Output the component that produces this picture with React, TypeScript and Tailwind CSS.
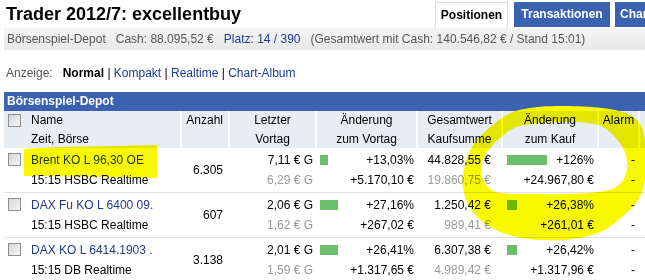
import React from "react";

type Row = {
  name: string; sub: string; qty: string; last: string; prev: string;
  vBar: number; vPct: string; vAbs: string; total: string; cost: string;
  kBar: number; kPct: string; kAbs: string;
};

const rows: Row[] = [
  { name: "Brent KO L 96,30 OE", sub: "15:15 HSBC Realtime", qty: "6.305", last: "7,11 € G", prev: "6,29 € G", vBar: 8, vPct: "+13,03%", vAbs: "+5.170,10 €", total: "44.828,55 €", cost: "19.860,75 €", kBar: 40, kPct: "+126%", kAbs: "+24.967,80 €" },
  { name: "DAX Fu KO L 6400 09.", sub: "15:15 HSBC Realtime", qty: "607", last: "2,06 € G", prev: "1,62 € G", vBar: 18, vPct: "+27,16%", vAbs: "+267,02 €", total: "1.250,42 €", cost: "989,41 €", kBar: 10, kPct: "+26,38%", kAbs: "+261,01 €" },
  { name: "DAX KO L 6414.1903 .", sub: "15:15 DB Realtime", qty: "3.138", last: "2,01 € G", prev: "1,59 € G", vBar: 18, vPct: "+26,41%", vAbs: "+1.317,65 €", total: "6.307,38 €", cost: "4.989,42 €", kBar: 10, kPct: "+26,42%", kAbs: "+1.317,96 €" },
];

function smooth(pts: number[][]): string {
  const n = pts.length;
  let d = `M${pts[0][0]},${pts[0][1]}`;
  for (let i = 0; i < n; i++) {
    const p0 = pts[(i - 1 + n) % n];
    const p1 = pts[i];
    const p2 = pts[(i + 1) % n];
    const p3 = pts[(i + 2) % n];
    const c1x = p1[0] + (p2[0] - p0[0]) / 6;
    const c1y = p1[1] + (p2[1] - p0[1]) / 6;
    const c2x = p2[0] - (p3[0] - p1[0]) / 6;
    const c2y = p2[1] - (p3[1] - p1[1]) / 6;
    d += ` C${c1x.toFixed(1)},${c1y.toFixed(1)} ${c2x.toFixed(1)},${c2y.toFixed(1)} ${p2[0]},${p2[1]}`;
  }
  return d + " Z";
}

const outer = [
  [505, 116], [530, 108], [565, 106], [602, 108], [628, 114], [641, 126], [646, 150], [645, 180],
  [638, 200], [622, 217], [600, 232], [565, 240], [522, 238], [492, 228], [472, 211], [463, 188],
  [465, 165], [476, 141],
];
const inner = [
  [500, 138], [520, 126], [565, 122], [595, 124], [611, 133], [624, 150], [627, 168], [621, 183],
  [605, 191], [570, 194], [530, 194], [500, 193], [487, 186], [481, 172], [484, 157], [492, 146],
];

const ring = smooth(outer) + " " + smooth(inner);

function Checkbox() {
  return (
    <div className="w-[13px] h-[13px] border border-[#8e8f8f] bg-gradient-to-br from-[#d6d6d6] to-[#f6f6f6] shrink-0" />
  );
}

function Bar({ w }: { w: number }) {
  return <div className="h-[10px] bg-[#6cbf6b]" style={{ width: w }} />;
}

const grid = "grid grid-cols-[176px_48px_87px_101px_85px_96px_41px_1fr]";

export default function App() {
  return (
    <div className="relative w-[645px] h-[280px] overflow-hidden bg-white text-[12px] text-black font-['Liberation_Sans',Arial,sans-serif] whitespace-nowrap">
      {/* title row */}
      <div className="flex h-[28px]">
        <div className="w-[435px] shrink-0 pl-[6px] pt-[2px] text-[18px] font-bold leading-[24px]">
          Trader 2012/7: excellentbuy
        </div>
        <div className="flex pt-[2px] shrink-0">
          <div className="w-[73px] h-[26px] border border-b-0 border-[#dcdcdc] bg-white font-bold leading-[25px] text-center">Positionen</div>
          <div className="ml-[6px] w-[96px] h-[25px] bg-[#3b62b1] text-white font-bold leading-[25px] text-center">Transaktionen</div>
          <div className="ml-[5px] h-[25px] pl-[5px] pr-[5px] bg-[#3b62b1] text-white font-bold leading-[25px]">Charts</div>
        </div>
      </div>

      {/* info bar */}
      <div className="ml-[4px] h-[22px] flex items-center gap-[10px] pl-[3px] bg-gradient-to-b from-[#f5f5f5] to-[#e8e8e8] text-[#555]">
        <span>Börsenspiel-Depot</span>
        <span>Cash: 88.095,52 €</span>
        <span className="text-[#1c3a96]">Platz: 14 / 390</span>
        <span>(Gesamtwert mit Cash: 140.546,82 € / Stand 15:01)</span>
      </div>

      {/* Anzeige */}
      <div className="h-[42px] pt-[4px] pl-[6px] flex items-center">
        <span className="text-[#555]">Anzeige:</span>
        <span className="ml-[10px] font-bold">Normal</span>
        <span>&nbsp;|&nbsp;</span>
        <span className="text-[#1c3a96]">Kompakt</span>
        <span>&nbsp;|&nbsp;</span>
        <span className="text-[#1c3a96]">Realtime</span>
        <span>&nbsp;|&nbsp;</span>
        <span className="text-[#1c3a96]">Chart-Album</span>
      </div>

      {/* table */}
      <div className="ml-[4px]">
        <div className="h-[19px] leading-[19px] pl-[3px] bg-[#3b62b1] text-white font-bold">Börsenspiel-Depot</div>
        <div className={`${grid} h-[37px] bg-[#e8ecf5] leading-[19px]`}>
          <div className="flex pl-[4px]">
            <div className="pt-[3px]"><Checkbox /></div>
            <div className="ml-[10px]">
              <div>Name</div>
              <div>Zeit, Börse</div>
            </div>
          </div>
          <div className="border-l-2 border-white text-right pr-[5px]">Anzahl</div>
          <div className="border-l-2 border-white text-center">
            <div>Letzter</div>
            <div>Vortag</div>
          </div>
          <div className="border-l-2 border-white text-center">
            <div>Änderung</div>
            <div>zum Vortag</div>
          </div>
          <div className="border-l-2 border-white text-center">
            <div>Gesamtwert</div>
            <div>Kaufsumme</div>
          </div>
          <div className="border-l-2 border-white text-center">
            <div>Änderung</div>
            <div>zum Kauf</div>
          </div>
          <div className="border-l-2 border-white text-center">Alarm</div>
          <div className="border-l-2 border-white" />
        </div>

        {rows.map((r, i) => (
          <div key={i} className={`${grid} pt-[2px] pb-[2px] leading-[20px] border-b border-[#e2e2e2]`}>
            <div className="flex pl-[4px]">
              <div className="pt-[3px]"><Checkbox /></div>
              <div className="ml-[10px]">
                <div className="text-[#213a8f]">{r.name}</div>
                <div>{r.sub}</div>
              </div>
            </div>
            <div className="flex items-center justify-end pr-[5px]">{r.qty}</div>
            <div className="text-right pr-[2px]">
              <div>{r.last}</div>
              <div className="text-[#999]">{r.prev}</div>
            </div>
            <div className="pl-[5px] pr-[2px]">
              <div className="flex items-center justify-between">
                <Bar w={r.vBar} />
                <span>{r.vPct}</span>
              </div>
              <div className="text-right">{r.vAbs}</div>
            </div>
            <div className="text-right pr-[10px]">
              <div>{r.total}</div>
              <div className="text-[#999]">{r.cost}</div>
            </div>
            <div className="pl-[6px] pr-[3px]">
              <div className="flex items-center justify-between">
                <Bar w={r.kBar} />
                <span>{r.kPct}</span>
              </div>
              <div className="text-right">{r.kAbs}</div>
            </div>
            <div className="text-right pr-[3px]">
              <div>-</div>
              <div>-</div>
            </div>
            <div />
          </div>
        ))}
      </div>

      {/* marker annotations: opaque over the blue bar, multiplied elsewhere */}
      <svg className="absolute inset-0 pointer-events-none" width="645" height="280" viewBox="0 0 645 280">
        <defs>
          <clipPath id="topband">
            <rect x="0" y="0" width="645" height="111" />
          </clipPath>
        </defs>
        <path d={ring} fill="#f8f800" fillRule="evenodd" clipPath="url(#topband)" />
      </svg>
      <svg className="absolute inset-0 pointer-events-none mix-blend-multiply" width="645" height="280" viewBox="0 0 645 280">
        <defs>
          <clipPath id="lowband">
            <rect x="0" y="111" width="645" height="169" />
          </clipPath>
        </defs>
        <path d="M24,149 L60,147 L120,146 L157,145 L157,178 L100,177 L40,176 L24,176 Z" fill="#f8f800" />
        <path d={ring} fill="#f8f800" fillRule="evenodd" clipPath="url(#lowband)" />
      </svg>
    </div>
  );
}
